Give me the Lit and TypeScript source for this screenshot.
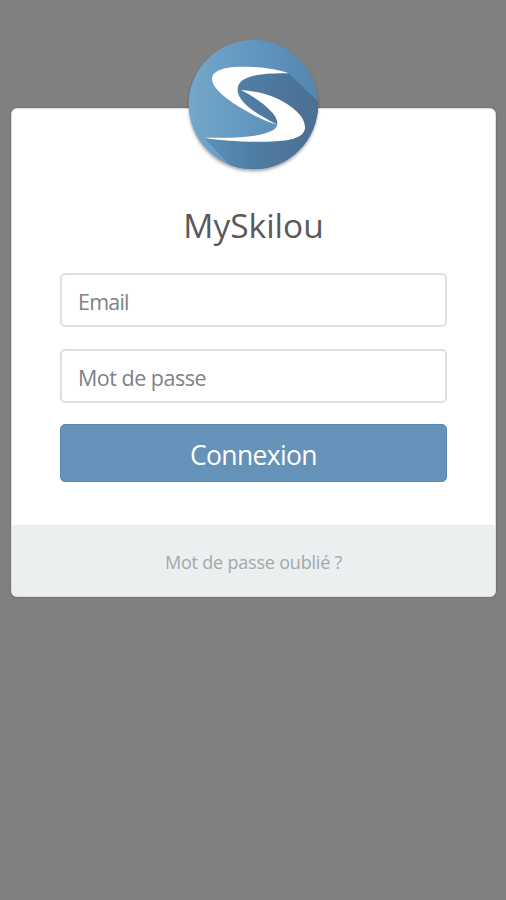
import { LitElement, html, css } from "lit";
import { customElement } from "lit/decorators.js";

@customElement("skilou-logo")
class SkilouLogo extends LitElement {
  static styles = css`
    :host { display: block; }
    svg { display: block; width: 150px; height: 150px; overflow: visible; }
  `;
  render() {
    return html`
      <svg viewBox="0 0 450 450" aria-hidden="true">
        <defs>
          <linearGradient id="disc" x1="0" y1="0.4" x2="1" y2="0.4">
            <stop offset="0" stop-color="#74a7c9" />
            <stop offset="0.5" stop-color="#6296bf" />
            <stop offset="1" stop-color="#5387b3" />
          </linearGradient>
          <linearGradient id="shade" x1="0" y1="0" x2="1" y2="0">
            <stop offset="0" stop-color="#527fa4" />
            <stop offset="1" stop-color="#4a6d93" />
          </linearGradient>
          <linearGradient id="low" gradientUnits="userSpaceOnUse" x1="70" y1="0" x2="410" y2="0">
            <stop offset="0" stop-color="#5c93b9" />
            <stop offset="0.4" stop-color="#507fa5" />
            <stop offset="1" stop-color="#4a6d93" />
          </linearGradient>
          <clipPath id="round"><circle cx="220" cy="224" r="194" /></clipPath>
          <filter id="drop" x="-10%" y="-10%" width="120%" height="125%">
            <feDropShadow dx="0" dy="6" stdDeviation="5" flood-color="#000" flood-opacity="0.35" />
          </filter>
        </defs>
        <circle cx="220" cy="224" r="194" fill="url(#disc)" filter="url(#drop)" />
        <g clip-path="url(#round)">
          <path fill="url(#low)" d="M72 323 C150 333 250 333 295 286 L325 130 L450 250 L450 450 L190 450 Z" />
          <path fill="url(#shade)" d="M326 130 C240 132 170 135 172 180 C180 220 235 255 293 283 L375 310 L430 230 Z" />
        </g>
        <path fill="#fff" d="M326 130 C285 114 218 108 165 111 C120 114 96 126 96 147 C98 184 165 225 225 257 C248 269 270 277 292 284 C230 253 176 219 173 182 C170 143 218 128 326 130 Z" />
        <path fill="#fff" d="M183 180 C238 183 293 201 330 228 C362 251 376 272 375 295 C371 326 325 334 263 335 C190 336 125 332 72 323 C143 324 205 325 248 312 C276 304 293 297 292 278 C291 252 246 213 183 180 Z" />
      </svg>
    `;
  }
}

@customElement("app-root")
class AppRoot extends LitElement {
  static styles = css`
    :host {
      display: block;
      box-sizing: border-box;
      height: 900px;
      padding: 108px 10px 0 11px;
      background: #808080;
      font-family: "Open Sans", "Noto Sans", sans-serif;
    }
    * { box-sizing: border-box; }
    .card {
      position: relative;
      display: flex;
      flex-direction: column;
      height: 489px;
      border: 1px solid #dcdddd;
      border-radius: 6px;
      background: #fff;
      box-shadow: 0 0 1px 1px #747474;
    }
    .logo { position: absolute; left: 168px; top: -79px; }
    .body { flex: 1; padding: 92px 48px 0; }
    h1 {
      margin: 0 0 23px;
      text-align: center;
      font-size: 33.5px;
      font-weight: 400;
      line-height: 49px;
      color: #58595b;
    }
    input {
      display: block;
      width: 100%;
      height: 54px;
      margin: 0 0 22px;
      padding: 2px 16px 0;
      border: 2px solid #dddfe0;
      border-radius: 5px;
      outline: 0;
      background: #fff;
      font-family: inherit;
      font-size: 21.5px;
    }
    .email { letter-spacing: -0.8px; }
    .pass { letter-spacing: -0.5px; margin-bottom: 21px; }
    input::placeholder { color: #7c8288; opacity: 1; }
    button {
      display: block;
      width: 100%;
      height: 58px;
      padding: 3px 0 0;
      border: 1px solid #568ab2;
      border-radius: 5px;
      background: #6592b8;
      color: #fff;
      font-family: inherit;
      font-size: 26.5px;
      letter-spacing: -0.65px;
    }
    .foot {
      display: flex;
      align-items: center;
      justify-content: center;
      height: 71px;
      padding-top: 2px;
      border-top: 1px solid #e3e7e8;
      border-radius: 4px;
      background: #ebeff0;
      color: #a4a8aa;
      font-size: 18px;
      letter-spacing: -0.2px;
    }
  `;
  render() {
    return html`
      <main class="card">
        <skilou-logo class="logo"></skilou-logo>
        <div class="body">
          <h1>MySkilou</h1>
          <input class="email" type="email" placeholder="Email" />
          <input class="pass" type="password" placeholder="Mot de passe" />
          <button>Connexion</button>
        </div>
        <div class="foot"><span>Mot de passe oublié ?</span></div>
      </main>
    `;
  }
}
